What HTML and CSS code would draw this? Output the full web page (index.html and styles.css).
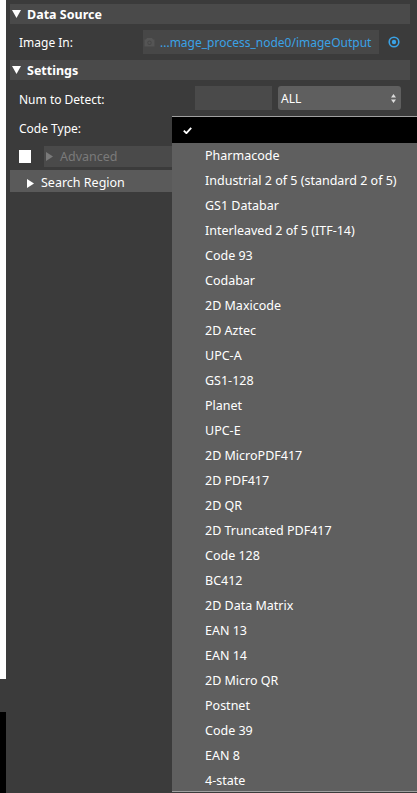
FILE: index.html
```html
<!DOCTYPE html>
<html>
<head>
<meta charset="utf-8">
<link rel="stylesheet" href="styles.css">
</head>
<body>
<div class="page">
  <div class="strip">
    <div class="strip-white"></div>
    <div class="strip-gap"></div>
    <div class="strip-black"></div>
  </div>
  <div class="panel">
    <div class="header"><svg class="tri" width="9" height="8" viewBox="0 0 9 8"><path d="M0 0h9L4.5 8z" fill="#fff"/></svg><span>Data Source</span></div>
    <div class="row row-image">
      <span class="label">Image In:</span>
      <div class="field">
        <svg class="cam" width="11" height="10" viewBox="0 0 11 10"><path d="M3 1h5l1 1.5h1.5v7h-10v-7h1.5z" fill="#555"/><circle cx="5.5" cy="5.8" r="2.2" fill="#474747"/><circle cx="5.5" cy="5.8" r="1.2" fill="#555"/></svg>
        <span class="link">...mage_process_node0/imageOutput</span>
      </div>
      <svg class="radio" width="12" height="12" viewBox="0 0 12 12"><circle cx="6" cy="6" r="4.8" fill="none" stroke="#3aa2e6" stroke-width="1.6"/><circle cx="6" cy="6" r="2.2" fill="#3aa2e6"/></svg>
    </div>
    <div class="header"><svg class="tri" width="9" height="8" viewBox="0 0 9 8"><path d="M0 0h9L4.5 8z" fill="#fff"/></svg><span>Settings</span></div>
    <div class="row row-num">
      <span class="label">Num to Detect:</span>
      <div class="num-input"></div>
      <div class="select"><span class="txt">ALL</span>
        <svg class="updown" width="5" height="9" viewBox="0 0 5 9"><path d="M2.5 0L5 3.5H0z M2.5 9L0 5.5h5z" fill="#ddd"/></svg>
      </div>
    </div>
    <div class="row row-code">
      <span class="label">Code Type:</span>
    </div>
    <div class="row row-adv">
      <div class="checkbox"></div>
      <div class="adv-bar"><svg class="tri-r" width="7" height="9" viewBox="0 0 7 9"><path d="M0 0l7 4.5L0 9z" fill="#7a7a7a"/></svg><span class="txt">Advanced</span></div>
    </div>
    <div class="search"><svg class="tri-r" width="7" height="9" viewBox="0 0 7 9"><path d="M0 0l7 4.5L0 9z" fill="#fff"/></svg><span>Search Region</span></div>
  </div>
  <div class="dropdown">
    <div class="dd-selected"><svg class="check" width="9" height="7" viewBox="0 0 9 7"><path d="M0.8 3.6L3.4 6.2L8.2 0.8" fill="none" stroke="#fff" stroke-width="1.8"/></svg></div>
    <ul class="dd-list">
      <li>Pharmacode</li>
      <li>Industrial 2 of 5 (standard 2 of 5)</li>
      <li>GS1 Databar</li>
      <li>Interleaved 2 of 5 (ITF-14)</li>
      <li>Code 93</li>
      <li>Codabar</li>
      <li>2D Maxicode</li>
      <li>2D Aztec</li>
      <li>UPC-A</li>
      <li>GS1-128</li>
      <li>Planet</li>
      <li>UPC-E</li>
      <li>2D MicroPDF417</li>
      <li>2D PDF417</li>
      <li>2D QR</li>
      <li>2D Truncated PDF417</li>
      <li>Code 128</li>
      <li>BC412</li>
      <li>2D Data Matrix</li>
      <li>EAN 13</li>
      <li>EAN 14</li>
      <li>2D Micro QR</li>
      <li>Postnet</li>
      <li>Code 39</li>
      <li>EAN 8</li>
      <li>4-state</li>
    </ul>
  </div>
</div>
</body>
</html>
```
FILE: styles.css
```css
html, body {
  margin: 0;
  padding: 0;
  background: #3b3b3b;
  font-family: "Noto Sans", "Open Sans", sans-serif;
  font-size: 12px;
  color: #ffffff;
}
.page {
  position: relative;
  display: flex;
  width: 417px;
  height: 793px;
  overflow: hidden;
}
.strip {
  width: 6px;
  display: flex;
  flex-direction: column;
}
.strip-white { height: 679px; background: #ffffff; }
.strip-gap { height: 33px; }
.strip-black { flex: 1; background: #000000; }
.panel {
  flex: 1;
  padding-top: 4px;
  display: flex;
  flex-direction: column;
}
.header {
  height: 20px;
  margin: 0 7px 0 4px;
  background: #4a4a4a;
  font-weight: bold;
  font-size: 12.5px;
  display: flex;
  align-items: center;
}
.header span { padding-top: 2px; line-height: 16px; }
.tri {
  margin-left: 2px;
  margin-right: 6px;
}
.row {
  display: flex;
  align-items: center;
}
.label {
  padding-left: 13px;
  padding-top: 2px;
  line-height: 16px;
  width: 137px;
  box-sizing: border-box;
}
.row-image {
  height: 36px;
}
.field {
  width: 236px;
  height: 24px;
  background: #474747;
  display: flex;
  align-items: center;
}
.cam { margin-left: 1px; margin-right: 5px; }
.link { color: #3aa2e6; white-space: nowrap; padding-top: 2px; line-height: 16px; }
.radio { margin-left: 9px; }
.row-num {
  height: 36px;
}
.row-num .label { width: 189px; padding-top: 3px; }
.num-input {
  width: 77px;
  height: 24px;
  background: #4a4a4a;
}
.select {
  margin-left: 6px;
  width: 123px;
  height: 24px;
  background: #5f5f5f;
  border-radius: 3px;
  display: flex;
  align-items: center;
  justify-content: space-between;
  padding: 0 5px 0 3px;
  box-sizing: border-box;
}
.txt { padding-top: 2px; line-height: 16px; }
.row-code { height: 24px; }
.row-adv {
  height: 30px;
  padding-top: 2px;
  box-sizing: border-box;
}
.checkbox {
  width: 12px;
  height: 13px;
  background: #ffffff;
  margin-left: 13px;
}
.adv-bar {
  margin-left: 13px;
  flex: 1;
  height: 21px;
  background: #4a4a4a;
  color: #7a7a7a;
  display: flex;
  align-items: center;
  font-size: 12.5px;
}
.tri-r {
  margin-left: 2px;
  margin-right: 7px;
}
.search {
  margin: 0 0 0 4px;
  height: 22px;
  width: 200px;
  background: #5a5a5a;
  display: flex;
  align-items: flex-start;
  padding-left: 15px;
  padding-top: 5px;
  box-sizing: border-box;
  overflow: hidden;
  font-size: 12.5px;
}
.search .tri-r { margin-top: 4px; }
.search span { line-height: 16px; }
.dropdown {
  position: absolute;
  left: 172px;
  top: 116px;
  right: 0;
  height: 676px;
  background: #5f5f5f;
  border-top: 1px solid #a0a0a0;
  border-bottom: 1px solid #a0a0a0;
  box-sizing: border-box;
}
.dd-selected {
  height: 26px;
  background: #000000;
  display: flex;
  align-items: center;
}
.check {
  margin-left: 11px;
}
.dd-list {
  list-style: none;
  margin: 0;
  padding: 0;
}
.dd-list li {
  height: 25px;
  line-height: 25px;
  padding-left: 33px;
  white-space: nowrap;
  font-size: 12.5px;
}
```
